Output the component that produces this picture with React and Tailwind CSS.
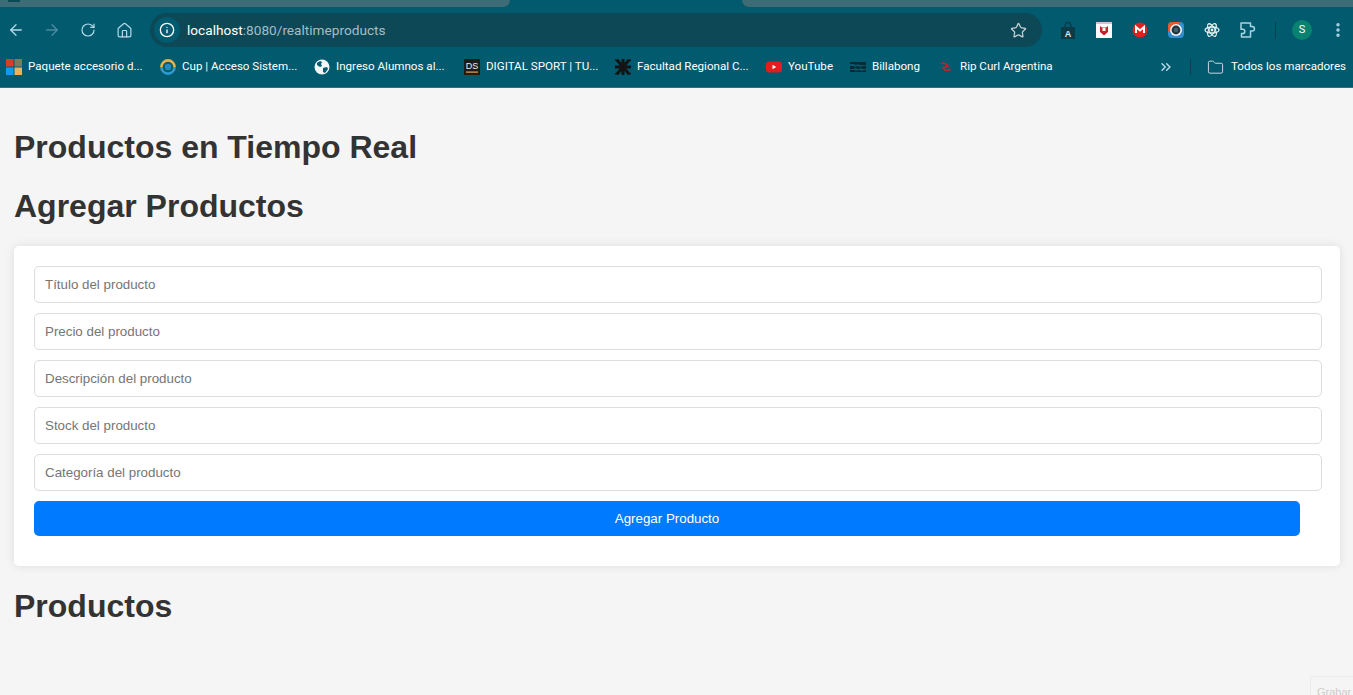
import React from 'react';
import { ArrowLeft, ArrowRight, RotateCw, Home, Info, Star, ChevronsRight, Folder, EllipsisVertical } from 'lucide-react';

const bookmarks = [
  { icon: 'office', label: 'Paquete accesorio d...', width: 'w-[154px]' },
  { icon: 'cup', label: 'Cup | Acceso Sistem...', width: 'w-[154px]' },
  { icon: 'globe', label: 'Ingreso Alumnos al...', width: 'w-[150px]' },
  { icon: 'ds', label: 'DIGITAL SPORT | TU...', width: 'w-[151px]' },
  { icon: 'utn', label: 'Facultad Regional C...', width: 'w-[151px]' },
  { icon: 'yt', label: 'YouTube', width: 'w-[84px]' },
  { icon: 'billabong', label: 'Billabong', width: 'w-[88px]' },
  { icon: 'ripcurl', label: 'Rip Curl Argentina', width: 'w-[132px]' },
];

const fields = [
  'Título del producto',
  'Precio del producto',
  'Descripción del producto',
  'Stock del producto',
  'Categoría del producto',
];

// favicons de la barra de marcadores
const Favicon = ({ name }) => {
  if (name === 'office') {
    return (
      <svg width="16" height="16" viewBox="0 0 16 16">
        <rect x="0" y="0" width="7.5" height="7.5" fill="#e03a26" />
        <rect x="8.5" y="0" width="7.5" height="7.5" fill="#7f7a5c" />
        <rect x="0" y="8.5" width="7.5" height="7.5" fill="#0f9bef" />
        <rect x="8.5" y="8.5" width="7.5" height="7.5" fill="#e8b35f" />
      </svg>
    );
  }
  if (name === 'cup') {
    return (
      <svg width="16" height="16" viewBox="0 0 16 16" fill="none">
        <path d="M1.4 8a6.6 6.6 0 0 1 13.2 0" stroke="#e9b04f" strokeWidth="2.6" />
        <path d="M14.6 8a6.6 6.6 0 0 1-13.2 0" stroke="#2f9ad6" strokeWidth="2.6" />
        <circle cx="8" cy="8" r="3.2" fill="#2a86bd" />
      </svg>
    );
  }
  if (name === 'globe') {
    return (
      <svg width="16" height="16" viewBox="0 0 16 16">
        <circle cx="8" cy="8" r="7.5" fill="#f2f5f6" />
        <path d="M3 4l3-2 2 1-1 2 1 2-2 1-3-2zM9 9l4-1 1 2-3 4-2-1z" fill="#015a6e" />
      </svg>
    );
  }
  if (name === 'ds') {
    return (
      <svg width="16" height="16" viewBox="0 0 16 16">
        <rect width="16" height="16" fill="#1c1c1c" />
        <text x="8" y="10" textAnchor="middle" fontSize="9" fill="#eeeeee" fontFamily="Liberation Sans, sans-serif">DS</text>
        <rect x="2" y="12.5" width="12" height="1.2" fill="#e2a94f" />
      </svg>
    );
  }
  if (name === 'utn') {
    return (
      <svg width="16" height="16" viewBox="0 0 16 16" stroke="#141414" strokeWidth="3">
        <path d="M8 0v16M0 8h16M2 1l12 14M14 1L2 15" />
        <path d="M0 1.2h16M0 14.8h16" strokeWidth="1.4" strokeDasharray="4 8" />
      </svg>
    );
  }
  if (name === 'yt') {
    return (
      <svg width="16" height="16" viewBox="0 0 16 16">
        <rect x="0" y="2.5" width="16" height="11" rx="3" fill="#e21d1d" />
        <path d="M6.5 5.8v4.4L10.2 8z" fill="#ffffff" />
      </svg>
    );
  }
  if (name === 'billabong') {
    return (
      <svg width="16" height="16" viewBox="0 0 16 16" fill="#082a33">
        <path d="M0 3h16v3H10L8 5 6 6 4 5H0zM0 7h3l2 1 3-1 2 1 3-1h3v3h-3l-2-1-3 1-3-1-2 1H0zM0 11h4l2 1 3-1 2 1 5-1v2H0z" />
      </svg>
    );
  }
  return (
    <svg width="16" height="16" viewBox="0 0 16 16" fill="none" stroke="#c8202a" strokeWidth="1.5">
      <path d="M3 4c3 0 6 1 7 3L5 9l2 2c2 .5 4 0 6-.5" />
    </svg>
  );
};

const Toolbar = () => (
  <div className="flex items-center h-[43px] pt-[3px] bg-[#015a6e]">
    <div className="flex items-center gap-1 text-[#b4dbe8]">
      <div className="flex justify-center w-8"><ArrowLeft size={18} strokeWidth={1.7} /></div>
      <div className="flex justify-center w-8 text-[#4f8ba0]"><ArrowRight size={18} strokeWidth={1.7} /></div>
      <div className="flex justify-center w-8"><RotateCw size={16} strokeWidth={1.8} /></div>
      <div className="flex justify-center w-8"><Home size={17} strokeWidth={1.7} /></div>
    </div>
    <div className="flex items-center flex-none ml-2.5 w-[892px] h-[34px] pl-1 pr-[15px] rounded-full bg-[#0d4856]">
      <div className="flex items-center justify-center w-[26px] h-[26px] rounded-full bg-[#015a6e] text-white">
        <Info size={16} strokeWidth={2} />
      </div>
      <div className="flex-1 ml-[7px] text-[13.65px] text-[#a3bec6] font-['Roboto',sans-serif]">
        <span className="text-white">localhost</span>:8080/realtimeproducts
      </div>
      <Star size={17} strokeWidth={1.8} className="text-[#c2ced2]" />
    </div>
    <div className="flex items-center flex-1 ml-2">
      <div className="flex justify-center w-9">
        <svg width="16" height="18" viewBox="0 0 16 18">
          <path d="M1 6h14v12H1z" fill="#0d3a47" />
          <path d="M5 6c0-6 6-6 6 0" fill="none" stroke="#0d3a47" strokeWidth="1.4" />
          <text x="8" y="15.5" textAnchor="middle" fontSize="9" fontWeight="700" fill="#dfe9ec" fontFamily="Liberation Sans, sans-serif">A</text>
        </svg>
      </div>
      <div className="flex justify-center w-9">
        <svg width="16" height="16" viewBox="0 0 16 16">
          <rect width="16" height="16" fill="#ffffff" />
          <rect width="16" height="2" fill="#c9c9c9" />
          <path d="M4 4l2 1.5h4L12 4v6l-4 3.5L4 10z" fill="#c8202a" />
          <rect x="6.5" y="6" width="3" height="3" fill="#ffffff" />
        </svg>
      </div>
      <div className="flex justify-center w-9">
        <svg width="16" height="16" viewBox="0 0 16 16">
          <circle cx="8" cy="8" r="7.5" fill="#e0201c" />
          <path d="M4 11V5l4 3.5L12 5v6" fill="none" stroke="#ffffff" strokeWidth="2" />
        </svg>
      </div>
      <div className="flex justify-center w-9">
        <svg width="16" height="16" viewBox="0 0 16 16">
          <rect width="16" height="16" rx="4" fill="#2f8fd0" />
          <path d="M0 10V4a4 4 0 0 1 4-4h8L8 8z" fill="#e9572e" />
          <circle cx="8" cy="8" r="6" fill="#f4f4f4" />
          <circle cx="8" cy="8" r="4.4" fill="#24343f" />
          <circle cx="8" cy="8" r="2.2" fill="#46606f" />
        </svg>
      </div>
      <div className="flex justify-center w-9">
        <svg width="16" height="16" viewBox="0 0 16 16" fill="none" stroke="#e6f0f3" strokeWidth="1.3">
          <ellipse cx="8" cy="8" rx="7" ry="3" />
          <ellipse cx="8" cy="8" rx="7" ry="3" transform="rotate(60 8 8)" />
          <ellipse cx="8" cy="8" rx="7" ry="3" transform="rotate(120 8 8)" />
          <circle cx="8" cy="8" r="1.4" fill="#e6f0f3" stroke="none" />
        </svg>
      </div>
      <div className="flex justify-center w-9 text-[#a9d4e2]">
        <svg width="18" height="18" viewBox="0 0 18 18" fill="none" stroke="currentColor" strokeWidth="1.5" strokeLinejoin="round">
          <path d="M2 2h9.5v3.5h1.7a2 2 0 0 1 0 4.5h-1.7V16H2.5v-3.5h1.2a2 2 0 0 0 0-4.2H2z" />
        </svg>
      </div>
      <div className="ml-[9px] w-px h-[17px] bg-[#0a3f4d]" />
      <div className="flex items-center justify-center ml-[16px] w-5 h-5 rounded-full bg-[#0a8270] text-white text-[11px] font-['Roboto',sans-serif]">S</div>
      <div className="flex justify-center ml-[16px] w-5 text-[#a9d4e2]"><EllipsisVertical size={18} strokeWidth={2.6} /></div>
    </div>
  </div>
);

const BookmarksBar = () => (
  <div className="flex items-center h-[38px] pb-[3px] pl-1.5 bg-[#015a6e] border-b border-[#2d7282] text-[11.6px] text-white font-['Roboto',sans-serif]">
    {bookmarks.map((b) => (
      <div key={b.label} className={`flex flex-none items-center gap-1.5 ${b.width}`}>
        <Favicon name={b.icon} />
        <span className="whitespace-nowrap">{b.label}</span>
      </div>
    ))}
    <div className="flex flex-none justify-center w-[16px] ml-[88px] text-[#b4dbe8]"><ChevronsRight size={16} strokeWidth={2.2} /></div>
    <div className="ml-4 w-px h-4 bg-[#0a3f4d]" />
    <Folder size={17} strokeWidth={1.4} className="flex-none ml-4 text-[#c8dce2]" />
    <span className="ml-[7px] whitespace-nowrap">Todos los marcadores</span>
  </div>
);

export default function App() {
  return (
    <div className="relative h-[695px] overflow-hidden bg-[#f5f5f5] font-['Liberation_Sans',Arial,sans-serif]">
      {/* navegador */}
      <div className="flex h-[7px] bg-[#015a6e]">
        <div className="w-[510px] bg-[#3d6b76] rounded-br-lg">
          <div className="ml-2 w-3 h-[2px] bg-[#0d4856]" />
        </div>
        <div className="w-[232px]" />
        <div className="flex-1 bg-[#3d6b76] rounded-bl-lg" />
      </div>
      <Toolbar />
      <BookmarksBar />

      <main className="pt-[41px] pl-[14px] pr-[13px] text-[#333333]">
        <h1 className="text-[32px] leading-[37px] font-bold">Productos en Tiempo Real</h1>
        <h2 className="mt-[22px] text-[32px] leading-[37px] font-bold">Agregar Productos</h2>

        <form className="flex flex-col gap-2.5 mt-[21px] pt-5 pb-[30px] pl-5 pr-[18px] bg-white rounded-[5px] shadow-[0_0_10px_rgba(0,0,0,0.1)]">
          {fields.map((f) => (
            <input
              key={f}
              type="text"
              placeholder={f}
              className="h-[37px] px-2.5 text-[13.33px] border border-[#dddddd] rounded-[5px] outline-none placeholder:text-[#757575]"
            />
          ))}
          <button
            type="button"
            className="h-[35px] mr-[22px] bg-[#007bff] text-white text-[13.33px] rounded-[5px]"
          >
            Agregar Producto
          </button>
        </form>

        <h2 className="mt-[22px] text-[32px] leading-[37px] font-bold">Productos</h2>
      </main>

      {/* boton de grabar de la extension */}
      <div className="absolute left-[1310px] top-[676px] w-[60px] h-[30px] pl-[6px] pt-[7px] border border-[#ebebeb] text-[11px] text-[#cccccc]">
        Grabar
      </div>
    </div>
  );
}
